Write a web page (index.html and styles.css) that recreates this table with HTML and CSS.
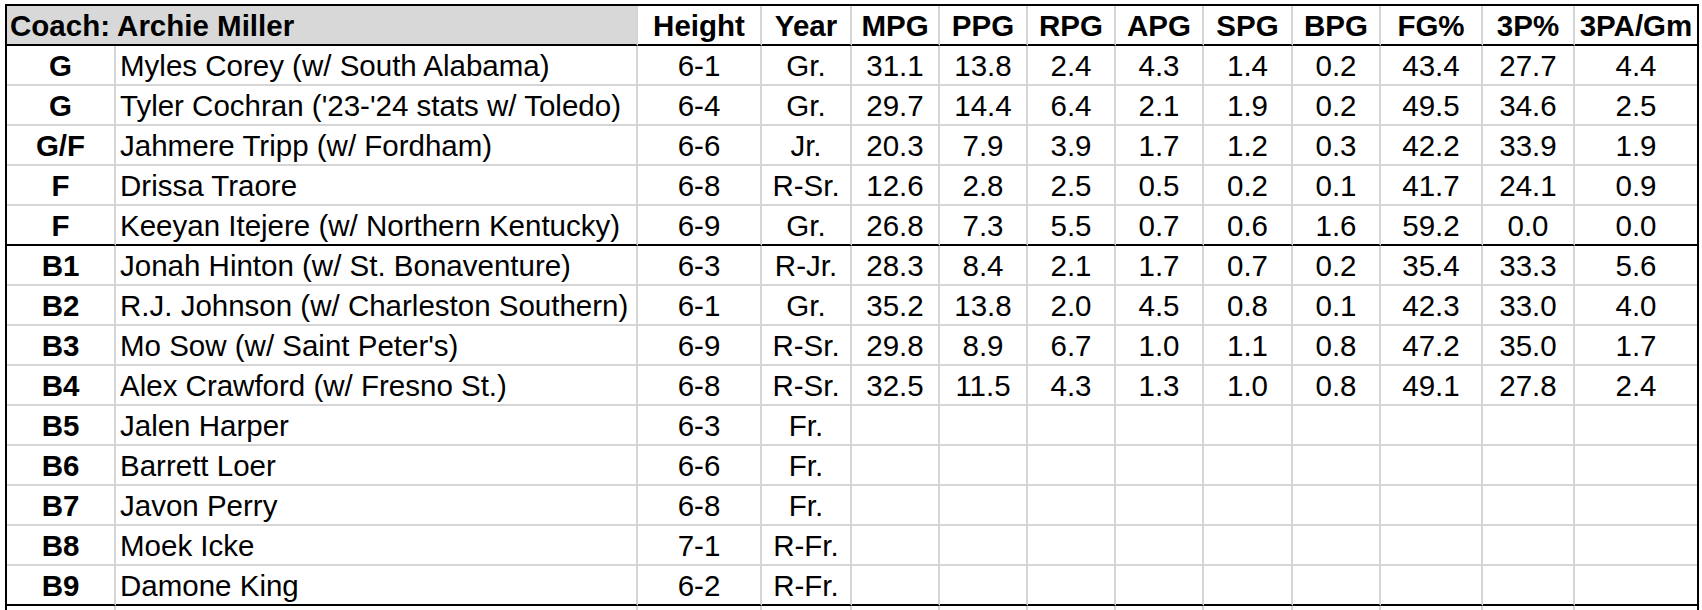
FILE: index.html
```html
<!DOCTYPE html>
<html lang="en">
<head>
<meta charset="utf-8">
<title>Roster</title>
<link rel="stylesheet" href="styles.css">
</head>
<body>
<div class="sheet">
  <div class="row head">
    <div class="cell coach">Coach: Archie Miller</div>
    <div class="cell">Height</div><div class="cell">Year</div><div class="cell">MPG</div><div class="cell">PPG</div><div class="cell">RPG</div><div class="cell">APG</div><div class="cell">SPG</div><div class="cell">BPG</div><div class="cell">FG%</div><div class="cell">3P%</div><div class="cell last">3PA/Gm</div>
  </div>
  <div class="row">
    <div class="cell pos">G</div><div class="cell name">Myles Corey (w/ South Alabama)</div>
    <div class="cell">6-1</div><div class="cell">Gr.</div><div class="cell">31.1</div><div class="cell">13.8</div><div class="cell">2.4</div><div class="cell">4.3</div><div class="cell">1.4</div><div class="cell">0.2</div><div class="cell">43.4</div><div class="cell">27.7</div><div class="cell last">4.4</div>
  </div>
  <div class="row">
    <div class="cell pos">G</div><div class="cell name">Tyler Cochran ('23-'24 stats w/ Toledo)</div>
    <div class="cell">6-4</div><div class="cell">Gr.</div><div class="cell">29.7</div><div class="cell">14.4</div><div class="cell">6.4</div><div class="cell">2.1</div><div class="cell">1.9</div><div class="cell">0.2</div><div class="cell">49.5</div><div class="cell">34.6</div><div class="cell last">2.5</div>
  </div>
  <div class="row">
    <div class="cell pos">G/F</div><div class="cell name">Jahmere Tripp (w/ Fordham)</div>
    <div class="cell">6-6</div><div class="cell">Jr.</div><div class="cell">20.3</div><div class="cell">7.9</div><div class="cell">3.9</div><div class="cell">1.7</div><div class="cell">1.2</div><div class="cell">0.3</div><div class="cell">42.2</div><div class="cell">33.9</div><div class="cell last">1.9</div>
  </div>
  <div class="row">
    <div class="cell pos">F</div><div class="cell name">Drissa Traore</div>
    <div class="cell">6-8</div><div class="cell">R-Sr.</div><div class="cell">12.6</div><div class="cell">2.8</div><div class="cell">2.5</div><div class="cell">0.5</div><div class="cell">0.2</div><div class="cell">0.1</div><div class="cell">41.7</div><div class="cell">24.1</div><div class="cell last">0.9</div>
  </div>
  <div class="row sep">
    <div class="cell pos">F</div><div class="cell name">Keeyan Itejere (w/ Northern Kentucky)</div>
    <div class="cell">6-9</div><div class="cell">Gr.</div><div class="cell">26.8</div><div class="cell">7.3</div><div class="cell">5.5</div><div class="cell">0.7</div><div class="cell">0.6</div><div class="cell">1.6</div><div class="cell">59.2</div><div class="cell">0.0</div><div class="cell last">0.0</div>
  </div>
  <div class="row">
    <div class="cell pos">B1</div><div class="cell name">Jonah Hinton (w/ St. Bonaventure)</div>
    <div class="cell">6-3</div><div class="cell">R-Jr.</div><div class="cell">28.3</div><div class="cell">8.4</div><div class="cell">2.1</div><div class="cell">1.7</div><div class="cell">0.7</div><div class="cell">0.2</div><div class="cell">35.4</div><div class="cell">33.3</div><div class="cell last">5.6</div>
  </div>
  <div class="row">
    <div class="cell pos">B2</div><div class="cell name">R.J. Johnson (w/ Charleston Southern)</div>
    <div class="cell">6-1</div><div class="cell">Gr.</div><div class="cell">35.2</div><div class="cell">13.8</div><div class="cell">2.0</div><div class="cell">4.5</div><div class="cell">0.8</div><div class="cell">0.1</div><div class="cell">42.3</div><div class="cell">33.0</div><div class="cell last">4.0</div>
  </div>
  <div class="row">
    <div class="cell pos">B3</div><div class="cell name">Mo Sow (w/ Saint Peter's)</div>
    <div class="cell">6-9</div><div class="cell">R-Sr.</div><div class="cell">29.8</div><div class="cell">8.9</div><div class="cell">6.7</div><div class="cell">1.0</div><div class="cell">1.1</div><div class="cell">0.8</div><div class="cell">47.2</div><div class="cell">35.0</div><div class="cell last">1.7</div>
  </div>
  <div class="row">
    <div class="cell pos">B4</div><div class="cell name">Alex Crawford (w/ Fresno St.)</div>
    <div class="cell">6-8</div><div class="cell">R-Sr.</div><div class="cell">32.5</div><div class="cell">11.5</div><div class="cell">4.3</div><div class="cell">1.3</div><div class="cell">1.0</div><div class="cell">0.8</div><div class="cell">49.1</div><div class="cell">27.8</div><div class="cell last">2.4</div>
  </div>
  <div class="row">
    <div class="cell pos">B5</div><div class="cell name">Jalen Harper</div>
    <div class="cell">6-3</div><div class="cell">Fr.</div><div class="cell"></div><div class="cell"></div><div class="cell"></div><div class="cell"></div><div class="cell"></div><div class="cell"></div><div class="cell"></div><div class="cell"></div><div class="cell last"></div>
  </div>
  <div class="row">
    <div class="cell pos">B6</div><div class="cell name">Barrett Loer</div>
    <div class="cell">6-6</div><div class="cell">Fr.</div><div class="cell"></div><div class="cell"></div><div class="cell"></div><div class="cell"></div><div class="cell"></div><div class="cell"></div><div class="cell"></div><div class="cell"></div><div class="cell last"></div>
  </div>
  <div class="row">
    <div class="cell pos">B7</div><div class="cell name">Javon Perry</div>
    <div class="cell">6-8</div><div class="cell">Fr.</div><div class="cell"></div><div class="cell"></div><div class="cell"></div><div class="cell"></div><div class="cell"></div><div class="cell"></div><div class="cell"></div><div class="cell"></div><div class="cell last"></div>
  </div>
  <div class="row">
    <div class="cell pos">B8</div><div class="cell name">Moek Icke</div>
    <div class="cell">7-1</div><div class="cell">R-Fr.</div><div class="cell"></div><div class="cell"></div><div class="cell"></div><div class="cell"></div><div class="cell"></div><div class="cell"></div><div class="cell"></div><div class="cell"></div><div class="cell last"></div>
  </div>
  <div class="row sep">
    <div class="cell pos">B9</div><div class="cell name">Damone King</div>
    <div class="cell">6-2</div><div class="cell">R-Fr.</div><div class="cell"></div><div class="cell"></div><div class="cell"></div><div class="cell"></div><div class="cell"></div><div class="cell"></div><div class="cell"></div><div class="cell"></div><div class="cell last"></div>
  </div>
  <div class="row">
    <div class="cell pos"></div><div class="cell name"></div>
    <div class="cell"></div><div class="cell"></div><div class="cell"></div><div class="cell"></div><div class="cell"></div><div class="cell"></div><div class="cell"></div><div class="cell"></div><div class="cell"></div><div class="cell"></div><div class="cell last"></div>
  </div>
</div>
</body>
</html>
```

FILE: styles.css
```css
html, body {
  margin: 0;
  padding: 0;
  overflow: hidden;
  background: #ffffff;
}

body {
  padding: 4px 0 0 5px;
  font-family: "Liberation Sans", Arial, sans-serif;
  font-size: 29.5px;
  color: #000;
}

.sheet {
  display: grid;
  grid-template-columns: 109px 522px 124px 90px 88px 88px 88px 88px 89px 88px 102px 92px 122px;
  width: max-content;
  border-top: 2px solid #000;
  border-left: 2px solid #000;
  border-right: 2px solid #000;
}

.row {
  display: contents;
}

.cell {
  box-sizing: border-box;
  height: 40px;
  padding-top: 2px;
  line-height: 36px;
  text-align: center;
  white-space: nowrap;
  border-right: 2px solid #d5d5d5;
  border-bottom: 2px solid #d5d5d5;
}

.cell.last {
  border-right: none;
}

.head .cell {
  font-weight: bold;
  border-bottom-color: #000;
}

.head .coach {
  grid-column: span 2;
  text-align: left;
  padding-left: 3px;
  background: #d8d8d8;
}

.pos {
  font-weight: bold;
}

.name {
  text-align: left;
  padding-left: 4px;
}

.sep .cell {
  border-bottom-color: #000;
}
```
